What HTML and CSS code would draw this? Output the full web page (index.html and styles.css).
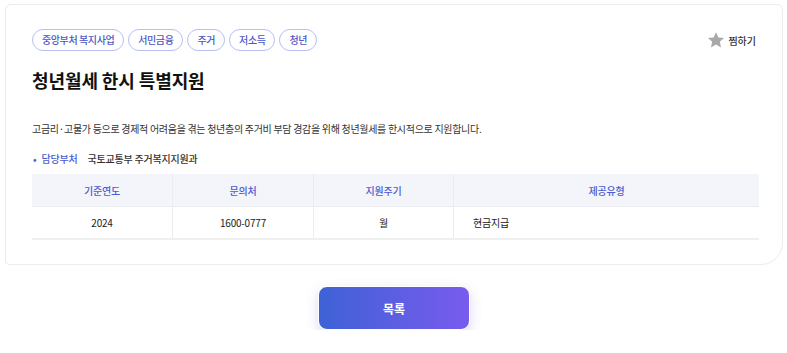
FILE: index.html
```html
<!DOCTYPE html>
<html>
  <head>
    <meta name="viewport" content="width=device-width, initial-scale=1.0" />
    <title>청년월세 한시 특별지원</title>
    <link rel="stylesheet" href="styles.css">
  </head>
  <body>
    <div class="card">
      <div class="card-head">
        <div class="tags">
          <span class="tag">중앙부처 복지사업</span>
          <span class="tag">서민금융</span>
          <span class="tag">주거</span>
          <span class="tag">저소득</span>
          <span class="tag">청년</span>
        </div>
        <button class="like">
          <svg width="18" height="18" viewBox="0 0 24 24">
            <path d="M12 1.5l3.2 7 7.6.8-5.7 5.1 1.6 7.5L12 18l-6.7 3.9 1.6-7.5L1.2 9.3l7.6-.8z" fill="#a9a9a9" />
          </svg>
          찜하기
        </button>
      </div>

      <h1 class="title">청년월세 한시 특별지원</h1>

      <p class="desc">고금리·고물가 등으로 경제적 어려움을 겪는 청년층의 주거비 부담 경감을 위해 청년월세를 한시적으로 지원합니다.</p>

      <div class="dept">
        <span class="dept-label">담당부처</span>
        <span>국토교통부 주거복지지원과</span>
      </div>

      <table class="info">
        <thead>
          <tr>
            <th class="col-s">기준연도</th>
            <th class="col-s">문의처</th>
            <th class="col-m">지원주기</th>
            <th>제공유형</th>
          </tr>
        </thead>
        <tbody>
          <tr>
            <td>2024</td>
            <td>1600-0777</td>
            <td>월</td>
            <td class="left">현금지급</td>
          </tr>
        </tbody>
      </table>
    </div>

    <div class="actions">
      <button class="list-btn">목록</button>
    </div>
  </body>
</html>
```

FILE: styles.css
```css
html {
  font-family: "Noto Sans CJK KR", "Noto Sans", sans-serif;
  color: #222;
  letter-spacing: -0.2px;
}
body {
  margin: 0;
  padding: 4px 4px 0 5px;
  background: #fff;
}
.card {
  box-sizing: border-box;
  width: 778px;
  height: 261px;
  padding: 24px 25px 0 26px;
  border: 1px solid #ececec;
  border-radius: 6px 6px 22px 4px;
  background: #fff;
}
.card-head {
  display: flex;
  justify-content: space-between;
  align-items: center;
}
.tags {
  display: flex;
  gap: 4px;
}
.tag {
  box-sizing: border-box;
  height: 22px;
  padding: 0 9px;
  border: 1px solid #b7c0f3;
  border-radius: 11px;
  font-size: 10px;
  font-weight: 500;
  line-height: 20px;
  color: #4c56c6;
  letter-spacing: -0.4px;
}
.like {
  display: flex;
  align-items: center;
  gap: 3px;
  margin-right: 1px;
  padding: 0;
  border: 0;
  background: none;
  font-family: inherit;
  font-size: 10px;
  font-weight: 500;
  color: #333;
}
.title {
  margin: 15px 0 0;
  font-size: 18px;
  line-height: 28px;
  font-weight: 700;
  color: #111;
  letter-spacing: -0.1px;
}
.desc {
  margin: 27px 0 0;
  font-size: 10px;
  line-height: 16px;
  color: #333;
  letter-spacing: -0.3px;
}
.dept {
  display: flex;
  gap: 10px;
  margin-top: 14px;
  font-size: 10px;
  font-weight: 500;
  line-height: 16px;
  color: #333;
}
.dept-label {
  color: #4a5ad0;
}
.dept-label:before {
  content: "•";
  margin: 0 5px 0 1px;
}
.info {
  width: 727px;
  margin-top: 7px;
  border-collapse: collapse;
  font-size: 10px;
}
.info th {
  height: 32px;
  padding: 0;
  background: #f4f5fa;
  border-bottom: 1px solid #ebecf0;
  font-weight: 500;
  color: #4b5bd0;
}
.info th + th,
.info td + td {
  border-left: 1px solid #ebecf0;
}
.col-s {
  width: 140px;
}
.col-m {
  width: 139px;
}
.info td {
  height: 31px;
  padding: 0;
  text-align: center;
  border-bottom: 2px solid #efefef;
  color: #222;
}
.info td.left {
  text-align: left;
  padding-left: 19px;
}
.actions {
  display: flex;
  justify-content: center;
  margin-top: 21px;
}
.list-btn {
  width: 152px;
  height: 44px;
  border: 1px solid #fff;
  border-radius: 9px;
  background: linear-gradient(90deg, #3e62d6, #795bee);
  box-shadow: 0 4px 12px rgba(110, 100, 230, 0.25);
  font-family: inherit;
  font-size: 12px;
  font-weight: 700;
  color: #fff;
}
```
